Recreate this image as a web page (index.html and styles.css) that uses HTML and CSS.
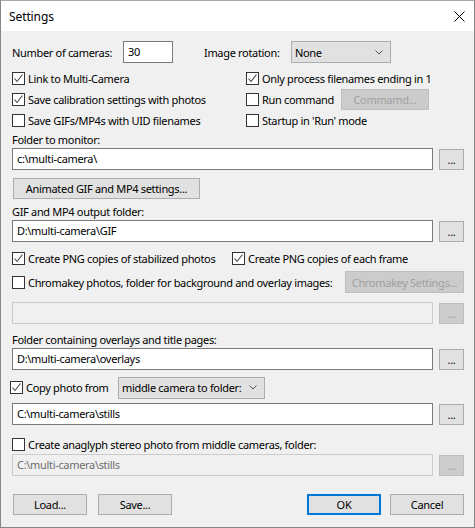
FILE: index.html
```html
<!DOCTYPE html>
<html lang="en">
  <head>
    <meta charset="utf-8">
    <title>Settings</title>
    <link rel="stylesheet" href="styles.css">
  </head>

  <body>
    <div class="dialog">
      <div class="titlebar">
        <span class="title">Settings</span>
        <svg class="close" width="11" height="11" viewBox="0 0 11 11">
          <path d="M0.5 0.5 L10.5 10.5 M10.5 0.5 L0.5 10.5" stroke="#000" stroke-width="1" fill="none"/>
        </svg>
      </div>

      <div class="content">
        <div class="row rowCameras">
          <span class="lblCameras">Number of cameras:</span>
          <div class="field fieldNum">30</div>
          <span class="lblRotation">Image rotation:</span>
          <div class="combo comboRotation">
            <span>None</span>
            <svg width="8" height="5" viewBox="0 0 8 5"><path d="M0.5 0.5 L4 4 L7.5 0.5" stroke="#555" fill="none"/></svg>
          </div>
        </div>

        <div class="checks">
          <div class="check"><span class="box on"><svg width="11" height="11" viewBox="0 0 11 11"><path d="M1.5 5.5 L4 8.5 L9.5 1.5" stroke="#444" stroke-width="1.1" fill="none"/></svg></span>Link to Multi-Camera</div>
          <div class="check"><span class="box on"><svg width="11" height="11" viewBox="0 0 11 11"><path d="M1.5 5.5 L4 8.5 L9.5 1.5" stroke="#444" stroke-width="1.1" fill="none"/></svg></span>Only process filenames ending in 1</div>
          <div class="check"><span class="box on"><svg width="11" height="11" viewBox="0 0 11 11"><path d="M1.5 5.5 L4 8.5 L9.5 1.5" stroke="#444" stroke-width="1.1" fill="none"/></svg></span>Save calibration settings with photos</div>
          <div class="check">
            <span class="box"></span><span class="runLabel">Run command</span>
            <button class="btn btnCommand" disabled>Commamd...</button>
          </div>
          <div class="check"><span class="box"></span>Save GIFs/MP4s with UID filenames</div>
          <div class="check"><span class="box"></span>Startup in 'Run' mode</div>
        </div>

        <div class="caption capMonitor">Folder to monitor:</div>
        <div class="pathRow">
          <div class="field path">c:\multi-camera\</div>
          <button class="btn browse">...</button>
        </div>

        <button class="btn btnAnimated">Animated GIF and MP4 settings...</button>

        <div class="caption capGif">GIF and MP4 output folder:</div>
        <div class="pathRow">
          <div class="field path">D:\multi-camera\GIF</div>
          <button class="btn browse">...</button>
        </div>

        <div class="row rowPng">
          <div class="check checkPngLeft"><span class="box on"><svg width="11" height="11" viewBox="0 0 11 11"><path d="M1.5 5.5 L4 8.5 L9.5 1.5" stroke="#444" stroke-width="1.1" fill="none"/></svg></span>Create PNG copies of stabilized photos</div>
          <div class="check"><span class="box on"><svg width="11" height="11" viewBox="0 0 11 11"><path d="M1.5 5.5 L4 8.5 L9.5 1.5" stroke="#444" stroke-width="1.1" fill="none"/></svg></span>Create PNG copies of each frame</div>
        </div>

        <div class="row rowChroma">
          <div class="check"><span class="box"></span>Chromakey photos, folder for background and overlay images:</div>
          <button class="btn btnChroma" disabled>Chromakey Settings...</button>
        </div>

        <div class="pathRow rowChromaPath">
          <div class="field path off"></div>
          <button class="btn browse" disabled>...</button>
        </div>

        <div class="caption capOverlays">Folder containing overlays and title pages:</div>
        <div class="pathRow">
          <div class="field path">D:\multi-camera\overlays</div>
          <button class="btn browse">...</button>
        </div>

        <div class="row rowCopy">
          <div class="check checkCopy"><span class="box on"><svg width="11" height="11" viewBox="0 0 11 11"><path d="M1.5 5.5 L4 8.5 L9.5 1.5" stroke="#444" stroke-width="1.1" fill="none"/></svg></span>Copy photo from</div>
          <div class="combo comboCopy">
            <span>middle camera to folder:</span>
            <svg width="8" height="5" viewBox="0 0 8 5"><path d="M0.5 0.5 L4 4 L7.5 0.5" stroke="#555" fill="none"/></svg>
          </div>
        </div>

        <div class="pathRow rowStills">
          <div class="field path">C:\multi-camera\stills</div>
          <button class="btn browse">...</button>
        </div>

        <div class="check checkAnaglyph"><span class="box"></span>Create anaglyph stereo photo from middle cameras, folder:</div>
        <div class="pathRow rowAnaglyphPath">
          <div class="field path off">C:\multi-camera\stills</div>
          <button class="btn browse" disabled>...</button>
        </div>

        <div class="footer">
          <button class="btn btnFoot">Load...</button>
          <button class="btn btnFoot btnSave">Save...</button>
          <span class="spacer"></span>
          <button class="btn btnFoot btnOk">OK</button>
          <button class="btn btnFoot btnCancel">Cancel</button>
        </div>
      </div>
    </div>
  </body>
</html>
```

FILE: styles.css
```css
html, body {
  margin: 0;
  padding: 0;
}

body {
  font-family: "Noto Sans", "Open Sans", sans-serif;
  font-size: 11px;
  letter-spacing: -0.32px;
  color: #000;
  white-space: nowrap;
}

.dialog {
  width: 475px;
  height: 528px;
  box-sizing: border-box;
  border: 1px solid #858585;
  border-top-color: #a8a8a8;
  background: #f0f0f0;
  overflow: hidden;
}

.titlebar {
  height: 30px;
  background: #fff;
  display: flex;
  align-items: center;
  padding: 0 9px 0 8px;
}
.title {
  flex: 1;
  margin-top: 1px;
  font-size: 12px;
  letter-spacing: -0.1px;
}

.content {
  display: flex;
  flex-direction: column;
  padding: 0 10px 0 11px;
}

.row {
  display: flex;
  align-items: center;
}

.rowCameras {
  margin-top: 10px;
  height: 22px;
}
.lblCameras { width: 111px; }
.fieldNum {
  width: 50px;
  padding-left: 6px;
}
.lblRotation {
  margin-left: 31px;
  width: 87px;
}

.field {
  height: 22px;
  box-sizing: border-box;
  border: 1px solid #7a7a7a;
  background: #fff;
  line-height: 20px;
  padding-left: 4px;
}
.field.off {
  background: #f0f0f0;
  border-color: #cccccc;
  color: #6d6d6d;
}

.combo {
  height: 22px;
  box-sizing: border-box;
  border: 1px solid #adadad;
  background: #e1e1e1;
  display: flex;
  align-items: center;
  justify-content: space-between;
  padding: 0 7px 0 3px;
}
.comboRotation { width: 100px; }

.checks {
  margin-top: 5px;
  display: grid;
  grid-template-columns: 234px 1fr;
  grid-auto-rows: 21px;
}

.check {
  display: flex;
  align-items: center;
}
.box {
  width: 13px;
  height: 13px;
  box-sizing: border-box;
  border: 1px solid #333;
  background: #fff;
  margin-right: 3px;
  flex: none;
  display: flex;
  align-items: center;
  justify-content: center;
}
.runLabel { width: 79px; }

.btn {
  font: inherit;
  letter-spacing: inherit;
  color: #000;
  height: 21px;
  box-sizing: border-box;
  border: 1px solid #adadad;
  background: #e1e1e1;
  padding: 0;
  margin: 0;
  line-height: 17px;
  white-space: nowrap;
}
.btn[disabled] {
  border-color: #bfbfbf;
  background: #cccccc;
  color: #a0a0a0;
}
.btnCommand { width: 88px; }

.caption {
  height: 16px;
  line-height: 16px;
}
.capMonitor { margin-top: 1px; }
.capGif { margin-top: 5px; }
.capOverlays { margin-top: 8px; }

.pathRow {
  display: flex;
  align-items: flex-start;
  gap: 6px;
}
.path { flex: 1; }
.browse {
  width: 25px;
  margin-top: 1px;
}

.btnAnimated {
  margin-top: 8px;
  width: 187px;
  margin-left: 1px;
  align-self: flex-start;
}

.rowPng {
  margin-top: 6px;
  height: 21px;
}
.checkPngLeft { width: 220px; }

.rowChroma {
  margin-top: 2px;
  height: 22px;
  justify-content: space-between;
}
.btnChroma {
  width: 119px;
  height: 22px;
}

.rowChromaPath { margin-top: 9px; }

.rowCopy {
  margin-top: 7px;
  height: 21px;
}
.checkCopy {
  margin-left: -2px;
  width: 108px;
}
.comboCopy { width: 147px; }

.rowStills { margin-top: 5px; }

.checkAnaglyph {
  margin-top: 11px;
  height: 17px;
}
.rowAnaglyphPath { margin-top: 1px; }

.footer {
  margin-top: 18px;
  display: flex;
  padding-left: 1px;
}
.btnFoot { width: 74px; }
.btnSave { margin-left: 11px; }
.spacer { flex: 1; }
.btnOk {
  border: 2px solid #0078d7;
  margin-right: 9px;
}
```
